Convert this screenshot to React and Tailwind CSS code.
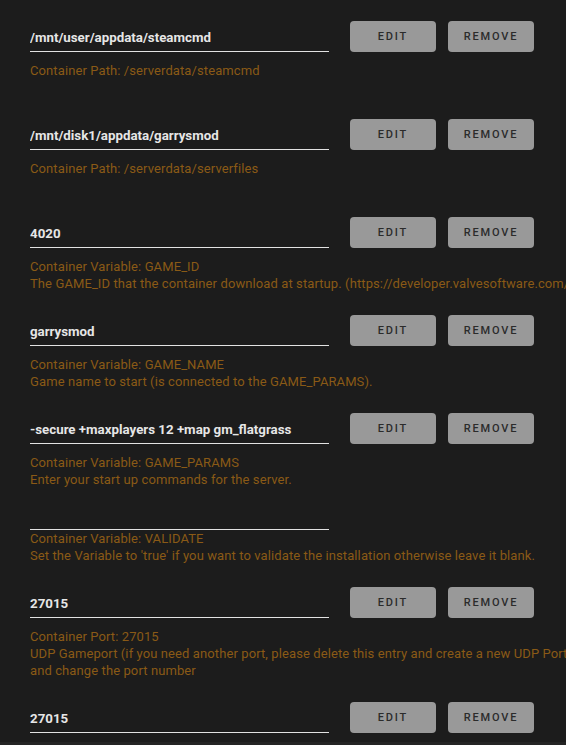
import React from 'react'

const rows = [
  { value: '/mnt/user/appdata/steamcmd', lines: ['Container Path: /serverdata/steamcmd', ''] },
  { value: '/mnt/disk1/appdata/garrysmod', lines: ['Container Path: /serverdata/serverfiles', ''] },
  {
    value: '4020',
    lines: [
      'Container Variable: GAME_ID',
      'The GAME_ID that the container download at startup. (https://developer.valvesoftware.com/wiki/Dedicated_Servers_List)',
    ],
  },
  {
    value: 'garrysmod',
    lines: ['Container Variable: GAME_NAME', 'Game name to start (is connected to the GAME_PARAMS).'],
  },
  {
    value: '-secure +maxplayers 12 +map gm_flatgrass',
    lines: ['Container Variable: GAME_PARAMS', 'Enter your start up commands for the server.'],
  },
  {
    value: '',
    hideButtons: true,
    lines: [
      'Container Variable: VALIDATE',
      "Set the Variable to 'true' if you want to validate the installation otherwise leave it blank.",
    ],
  },
  {
    value: '27015',
    lines: [
      'Container Port: 27015',
      'UDP Gameport (if you need another port, please delete this entry and create a new UDP Port',
      'and change the port number',
    ],
  },
  { value: '27015', lines: ['Container Port: 27015', 'TCP Gameport'] },
]

const Button = ({ children }) => (
  <button className="w-[86px] h-[31px] pt-[2px] rounded-[4px] bg-[#999999] text-[#2b2b2b] text-[11px] font-medium tracking-[1.8px] uppercase">
    {children}
  </button>
)

const ConfigRow = ({ row }) => (
  <div className="mb-[13px]">
    <div className={row.hideButtons ? 'flex items-end' : 'flex items-end py-[10px]'}>
      <input
        readOnly
        value={row.value}
        className="w-[299px] h-[29px] shrink-0 bg-transparent border-b border-[#e2e2e2] text-[13.3px] font-bold text-[#e6e6e6] outline-none"
      />
      {!row.hideButtons && (
        <div className="flex gap-3 ml-[21px] shrink-0">
          <Button>Edit</Button>
          <Button>Remove</Button>
        </div>
      )}
    </div>
    <div className="text-[13px] leading-[17px] tracking-[0.1px] text-[#8a5a16] whitespace-nowrap">
      {row.lines.map((line, i) => (
        <div key={i} className="h-[17px]">
          {line}
        </div>
      ))}
    </div>
  </div>
)

export default function App() {
  return (
    <div className="w-[566px] h-[745px] bg-[#1c1c1c] flex flex-col overflow-hidden font-['Roboto',sans-serif]">
      <div className="h-[742px] overflow-hidden pt-[11px] pl-[30px]">
        {rows.map((row, i) => (
          <ConfigRow key={i} row={row} />
        ))}
      </div>
      <div className="flex-1 bg-[#242424]" />
    </div>
  )
}
